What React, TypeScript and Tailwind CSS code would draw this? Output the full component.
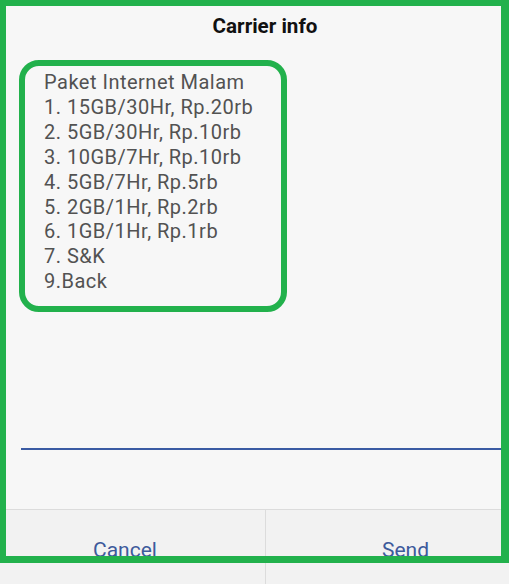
import React from "react";

export default function App() {
  const lines = [
    "Paket Internet Malam",
    "1. 15GB/30Hr, Rp.20rb",
    "2. 5GB/30Hr, Rp.10rb",
    "3. 10GB/7Hr, Rp.10rb",
    "4. 5GB/7Hr, Rp.5rb",
    "5. 2GB/1Hr, Rp.2rb",
    "6. 1GB/1Hr, Rp.1rb",
    "7. S&K",
    "9.Back",
  ];
  return (
    <div
      className="relative w-[509px] h-[584px] overflow-hidden bg-[#f7f7f7]"
      style={{ fontFamily: "Roboto, 'Noto Sans', sans-serif" }}
    >
      <div className="w-[560px] -ml-[15px] flex flex-col">
        <div className="pt-[14px] text-center text-[20.6px] leading-[24px] font-bold text-[#111111]">
          Carrier info
        </div>
        <div className="mt-[22px] ml-[34px] w-[268px] h-[252px] border-[6px] border-[#22b14c] rounded-[20px] pt-[4px] pl-[19px]">
          {lines.map((l) => (
            <div key={l} className="text-[20px] leading-[24.9px] tracking-[0.5px] text-[#525252] whitespace-nowrap">
              {l}
            </div>
          ))}
        </div>
        <div className="mt-[136px] ml-[36px] h-[2px] bg-[#3a5ba3]" />
        <div className="mt-[59px] h-[75px] border-t border-[#dcdcdc] bg-[#f2f2f2] grid grid-cols-2">
          <div className="pt-[28px] text-center text-[21px] leading-[24px] text-[#3d5a9c]">Cancel</div>
          <div className="pt-[28px] text-center text-[21px] leading-[24px] text-[#3d5a9c] border-l border-[#dcdcdc]">Send</div>
        </div>
      </div>
      <div className="absolute left-0 top-0 w-[509px] h-[563px] border-t-[6px] border-l-[6px] border-r-[8px] border-b-[7px] border-[#22b14c] pointer-events-none" />
    </div>
  );
}
